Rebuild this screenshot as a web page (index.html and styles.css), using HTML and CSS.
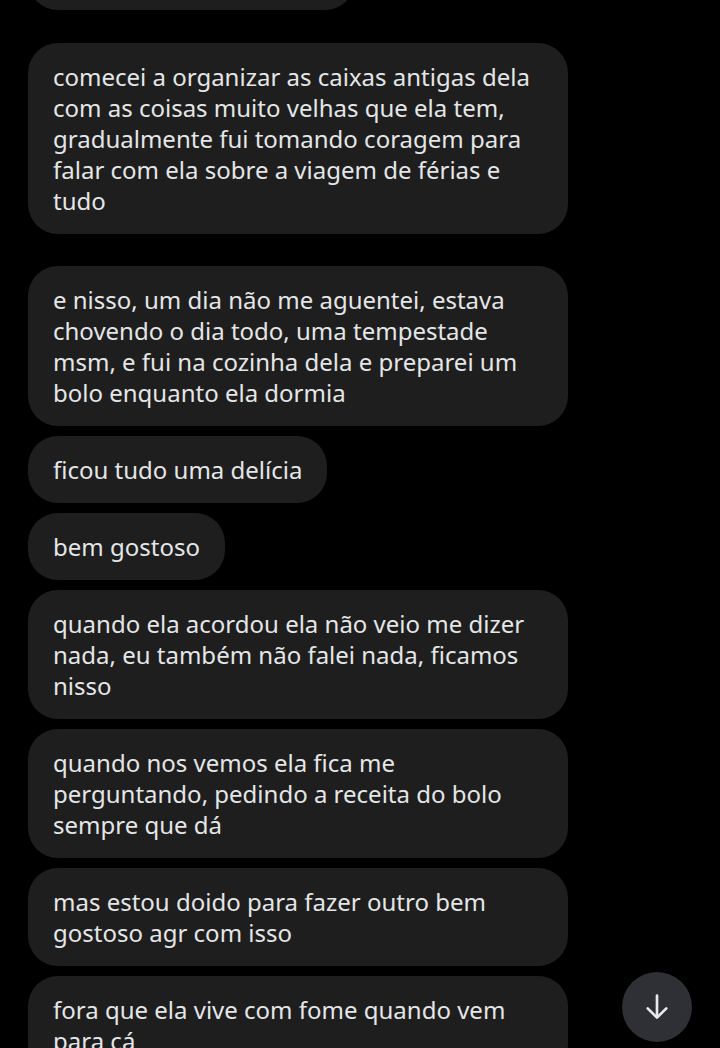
FILE: index.html
```html
<!DOCTYPE html>
<html lang="pt">
<head>
  <meta charset="UTF-8">
  <meta name="viewport" content="width=device-width, initial-scale=1.0">
  <title>Mensagens</title>
  <link rel="stylesheet" href="styles.css">
</head>
<body>
<main class="chat">
  <div class="group first">
    <div class="bubble"></div>
  </div>

  <div class="group">
    <div class="bubble">comecei a organizar as caixas antigas dela com as coisas muito velhas que ela tem, gradualmente fui tomando coragem para falar com ela sobre a viagem de férias e tudo</div>
  </div>

  <div class="group">
    <div class="bubble">e nisso, um dia não me aguentei, estava chovendo o dia todo, uma tempestade msm, e fui na cozinha dela e preparei um bolo enquanto ela dormia</div>
    <div class="bubble">ficou tudo uma delícia</div>
    <div class="bubble">bem gostoso</div>
    <div class="bubble">quando ela acordou ela não veio me dizer nada, eu também não falei nada, ficamos nisso</div>
    <div class="bubble">quando nos vemos ela fica me perguntando, pedindo a receita do bolo sempre que dá</div>
    <div class="bubble">mas estou doido para fazer outro bem gostoso agr com isso</div>
    <div class="bubble">fora que ela vive com fome quando vem para cá</div>
  </div>
</main>

<button class="scroll-down" aria-label="Ir para o fim">
  <svg width="32" height="32" viewBox="0 0 24 24" fill="none" stroke="#e7e9ea" stroke-width="2" stroke-linecap="round" stroke-linejoin="round">
    <path d="M12 3.5v16"/>
    <path d="M5 13l7 7 7-7"/>
  </svg>
</button>
</body>
</html>
```

FILE: styles.css
```css
html, body {
  margin: 0;
  background: #000;
  height: 100%;
  overflow: hidden;
}

body {
  font-family: "Noto Sans", Roboto, "Liberation Sans", sans-serif;
  color: #e4e6e7;
}

.chat {
  display: flex;
  flex-direction: column;
  gap: 32px;
  padding: 0 28px;
}

.group {
  display: flex;
  flex-direction: column;
  align-items: flex-start;
  gap: 10px;
}

/* only the bottom edge of this bubble is still on screen */
.group.first {
  margin-top: -57px;
  margin-bottom: 1px;
}

.bubble {
  box-sizing: border-box;
  max-width: 540px;
  padding: 18px 25px;
  background: #1e1e1e;
  border-radius: 30px;
  font-size: 24px;
  line-height: 31px;
}

.group.first .bubble {
  width: 327px;
  height: 67px;
}

.scroll-down {
  position: fixed;
  right: 28px;
  bottom: 6px;
  width: 70px;
  height: 70px;
  border: none;
  border-radius: 50%;
  background: #2e3035;
  display: flex;
  align-items: center;
  justify-content: center;
  padding: 0;
}
```
